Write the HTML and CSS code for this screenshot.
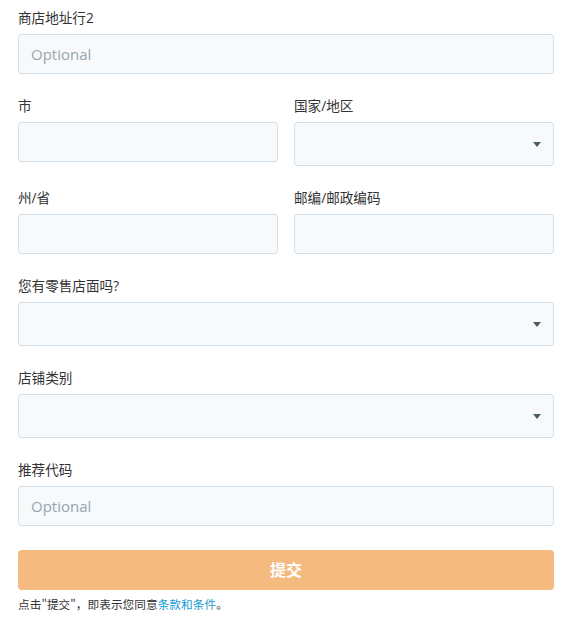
FILE: index.html
```html
<!DOCTYPE html>
<html lang="zh-CN">
<head>
<meta charset="utf-8">
<link rel="stylesheet" href="styles.css">
</head>
<body>
<form class="form">
  <div class="field">
    <label class="label">商店地址行2</label>
    <input class="input" type="text" placeholder="Optional">
  </div>
  <div class="row">
    <div class="field">
      <label class="label">市</label>
      <input class="input" type="text">
    </div>
    <div class="field">
      <label class="label">国家/地区</label>
      <div class="select"><span class="caret"></span></div>
    </div>
  </div>
  <div class="row">
    <div class="field">
      <label class="label">州/省</label>
      <input class="input" type="text">
    </div>
    <div class="field">
      <label class="label">邮编/邮政编码</label>
      <input class="input" type="text">
    </div>
  </div>
  <div class="field">
    <label class="label">您有零售店面吗?</label>
    <div class="select"><span class="caret"></span></div>
  </div>
  <div class="field">
    <label class="label">店铺类别</label>
    <div class="select"><span class="caret"></span></div>
  </div>
  <div class="field">
    <label class="label">推荐代码</label>
    <input class="input" type="text" placeholder="Optional">
  </div>
  <button class="submit" type="button">提交</button>
  <p class="terms">点击"提交"，即表示您同意<a class="link">条款和条件</a>。</p>
</form>
</body>
</html>
```
FILE: styles.css
```css
* { box-sizing: border-box; }
html, body { margin: 0; padding: 0; background: #fff; }
body {
  font-family: "Open Sans", "Noto Sans CJK SC", sans-serif;
  color: #333;
}
.form {
  width: 536px;
  margin: 0 0 0 18px;
  padding-top: 9px;
  display: flex;
  flex-direction: column;
  gap: 23px;
}
.row {
  display: grid;
  grid-template-columns: 1fr 1fr;
  column-gap: 16px;
}
.field {
  display: flex;
  flex-direction: column;
}
.label {
  font-size: 13.6px;
  line-height: 18px;
  height: 18px;
  margin-bottom: 7px;
  color: #333;
}
.input {
  height: 40px;
  width: 100%;
  background: #f7f9fa;
  border: 1px solid #d3e0ea;
  border-radius: 3px;
  padding: 0 12px;
  font-family: "Open Sans", sans-serif;
  font-size: 15px;
  color: #333;
  outline: none;
}
.input::placeholder { color: #97a6b1; }
.select {
  position: relative;
  height: 44px;
  width: 100%;
  background: #f7f9fa;
  border: 1px solid #d3e0ea;
  border-radius: 3px;
}
.caret {
  position: absolute;
  right: 12px;
  top: 19px;
  width: 0;
  height: 0;
  border-left: 4px solid transparent;
  border-right: 4px solid transparent;
  border-top: 5px solid #4b5b67;
}
.submit {
  margin-top: 1px;
  height: 40px;
  width: 100%;
  border: none;
  border-radius: 4px;
  background: #f5ba80;
  color: #fff;
  font-family: "Noto Sans CJK SC", sans-serif;
  font-size: 16px;
  font-weight: 700;
  line-height: 36px;
  padding: 0 0 2px;
}
.terms {
  margin: -17px 0 0 0;
  font-size: 11.7px;
  line-height: 16px;
  color: #333;
  font-family: "Noto Sans CJK SC", sans-serif;
}
.link { color: #1a9ad6; }
```
